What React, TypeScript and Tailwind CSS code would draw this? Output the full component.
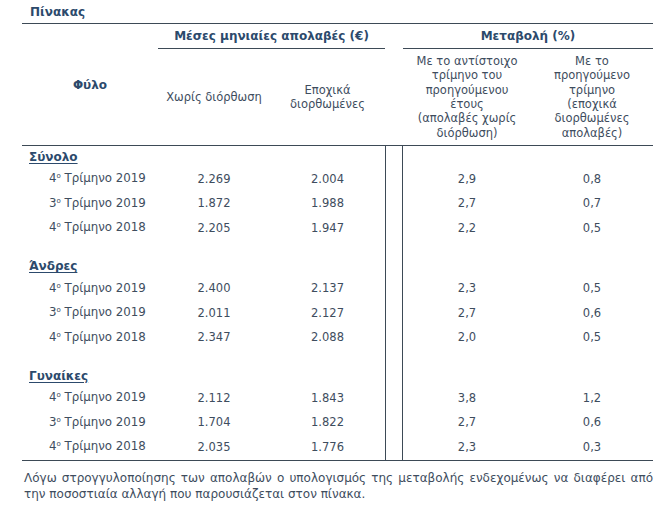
import React from "react";

type Row = { label: [string, string]; raw: string; adj: string; yoy: string; qoq: string };
type Section = { title: string; rows: Row[] };

const sections: Section[] = [
  {
    title: "Σύνολο",
    rows: [
      { label: ["4", "Τρίμηνο 2019"], raw: "2.269", adj: "2.004", yoy: "2,9", qoq: "0,8" },
      { label: ["3", "Τρίμηνο 2019"], raw: "1.872", adj: "1.988", yoy: "2,7", qoq: "0,7" },
      { label: ["4", "Τρίμηνο 2018"], raw: "2.205", adj: "1.947", yoy: "2,2", qoq: "0,5" },
    ],
  },
  {
    title: "Άνδρες",
    rows: [
      { label: ["4", "Τρίμηνο 2019"], raw: "2.400", adj: "2.137", yoy: "2,3", qoq: "0,5" },
      { label: ["3", "Τρίμηνο 2019"], raw: "2.011", adj: "2.127", yoy: "2,7", qoq: "0,6" },
      { label: ["4", "Τρίμηνο 2018"], raw: "2.347", adj: "2.088", yoy: "2,0", qoq: "0,5" },
    ],
  },
  {
    title: "Γυναίκες",
    rows: [
      { label: ["4", "Τρίμηνο 2019"], raw: "2.112", adj: "1.843", yoy: "3,8", qoq: "1,2" },
      { label: ["3", "Τρίμηνο 2019"], raw: "1.704", adj: "1.822", yoy: "2,7", qoq: "0,6" },
      { label: ["4", "Τρίμηνο 2018"], raw: "2.035", adj: "1.776", yoy: "2,3", qoq: "0,3" },
    ],
  },
];

// the double vertical rule between the two groups of columns
const Gap = () => <div className="w-[18px] self-stretch border-x border-[#3d4a56]" />;

const App: React.FC = () => {
  return (
    <div
      className="w-[660px] h-[515px] bg-white text-[11.5px] text-[#3e4d5e]"
      style={{ fontFamily: '"DejaVu Sans", Verdana, sans-serif' }}
    >
      <div className="ml-[22px] w-[631px]">
        <div className="h-[23px] pl-2 pt-[3px] font-bold text-[12px] text-[#2c4a6c]">Πίνακας</div>

        {/* header */}
        <div className="flex border-y border-[#3d4a56]">
          <div className="w-[136px] flex items-center justify-center font-bold text-[12px] text-[#2c4a6c]">
            Φύλο
          </div>
          <div className="flex flex-col">
            <div className="h-[25px] flex items-center justify-center border-b border-[#3d4a56] font-bold text-[12px] text-[#2c4a6c]">
              Μέσες μηνιαίες απολαβές (€)
            </div>
            <div className="flex h-[96px] items-center text-center leading-[14px]">
              <div className="w-[112px] whitespace-nowrap">Χωρίς διόρθωση</div>
              <div className="w-[115px]">
                Εποχικά
                <br />
                διορθωμένες
              </div>
            </div>
          </div>
          <div className="w-[18px]" />
          <div className="flex flex-col">
            <div className="h-[25px] flex items-center justify-center border-b border-[#3d4a56] font-bold text-[12px] text-[#2c4a6c]">
              Μεταβολή (%)
            </div>
            <div className="flex h-[96px] items-center text-center leading-[14.4px] whitespace-nowrap">
              <div className="w-[128px]">
                Με το αντίστοιχο
                <br />
                τρίμηνο του
                <br />
                προηγούμενου
                <br />
                έτους
                <br />
                (απολαβές χωρίς
                <br />
                διόρθωση)
              </div>
              <div className="w-[122px]">
                Με το
                <br />
                προηγούμενο
                <br />
                τρίμηνο
                <br />
                (εποχικά
                <br />
                διορθωμένες
                <br />
                απολαβές)
              </div>
            </div>
          </div>
        </div>

        {/* body */}
        <div className="border-b border-[#3d4a56]">
          {sections.map((s, i) => (
            <React.Fragment key={s.title}>
              {i > 0 && (
                <div className="flex h-[15px]">
                  <div className="w-[363px]" />
                  <Gap />
                </div>
              )}
              <div className="flex h-[21px] items-center">
                <div className="w-[363px] pl-[7px] font-bold text-[12px] text-[#2c4a6c] underline underline-offset-2">
                  {s.title}
                </div>
                <Gap />
              </div>
              {s.rows.map((r, j) => (
                <div key={j} className="flex h-[24.5px] items-center">
                  <div className="w-[136px] pl-[27px] whitespace-nowrap text-[11.8px]">
                    {r.label[0]}
                    <sup className="text-[7px] -top-[4px]">ο</sup> {r.label[1]}
                  </div>
                  <div className="w-[112px] text-center">{r.raw}</div>
                  <div className="w-[115px] text-center">{r.adj}</div>
                  <Gap />
                  <div className="w-[128px] text-center">{r.yoy}</div>
                  <div className="w-[122px] text-center">{r.qoq}</div>
                </div>
              ))}
            </React.Fragment>
          ))}
        </div>

        <p className="mt-[9px] pl-[2px] text-justify text-[12px] leading-[16px]">
          Λόγω στρογγυλοποίησης των απολαβών ο υπολογισμός της μεταβολής ενδεχομένως να διαφέρει από
          την ποσοστιαία αλλαγή που παρουσιάζεται στον πίνακα.
        </p>
      </div>
    </div>
  );
};

export default App;
